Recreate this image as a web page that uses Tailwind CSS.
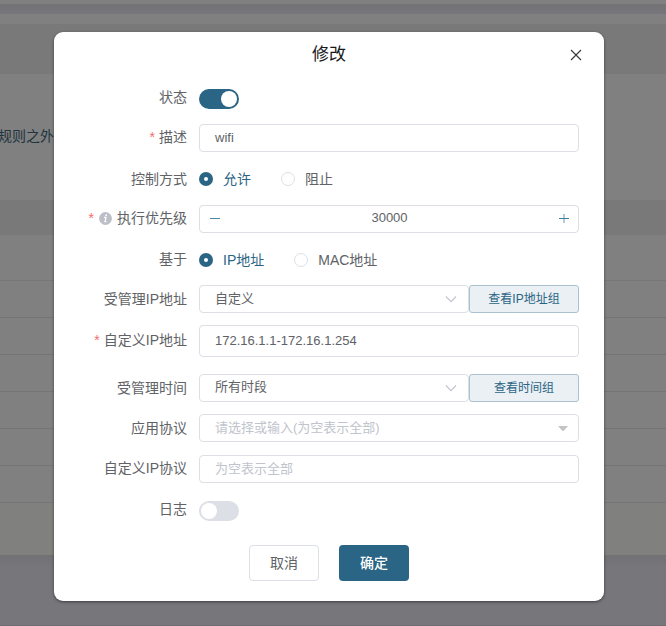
<!DOCTYPE html>
<html lang="zh-CN">
<head>
<meta charset="utf-8">
<title>修改</title>
<script src="https://cdn.jsdelivr.net/npm/@tailwindcss/browser@4"></script>
</head>
<body class="relative h-[626px] w-[666px] overflow-hidden bg-[#76757a] font-['Liberation_Sans','Noto_Sans_CJK_SC',sans-serif] text-sm text-[#606266]">
<!-- dimmed page behind the dialog -->
<div class="flex h-[626px] flex-col">
  <div class="h-1 bg-[#808080]"></div>
  <div class="h-2.5 bg-linear-to-b from-[#737375] to-[#77767c]"></div>
  <div class="h-2.5 bg-[#808080]"></div>
  <div class="h-[50px] bg-[#797979]"></div>
  <div class="h-[126px] bg-[#808080] pt-[52px] leading-5 text-[#20343f]"><span class="-ml-0.5">规则之外</span></div>
  <div class="h-[35px] bg-[#797979]"></div>
  <div class="h-[46px] border-b border-[#76767b] bg-[#808080]"></div>
  <div class="h-[37px] border-b border-[#757577] bg-[#808080]"></div>
  <div class="h-[37px] border-b border-[#757577] bg-[#808080]"></div>
  <div class="h-[37px] border-b border-[#757577] bg-[#808080]"></div>
  <div class="h-[37px] border-b border-[#757577] bg-[#808080]"></div>
  <div class="h-[37px] border-b border-[#757577] bg-[#808080]"></div>
  <div class="h-[37px] border-b border-[#757577] bg-[#808080]"></div>
  <div class="h-[52px] bg-[#80807f]"></div>
  <div class="h-[70px] bg-linear-to-b from-[#727175] to-[#77767b] to-20%"></div>
  <div class="h-px bg-[#6e6b6e]"></div>
</div>

<!-- dialog -->
<div class="absolute left-[54px] top-8 flex h-[569px] w-[550px] flex-col rounded-[9px] bg-white pr-[25px] shadow-[0_1px_3px_rgba(0,0,0,0.5)]">
  <div class="flex h-[52px] items-start">
    <div class="w-[22px]"></div>
    <h1 class="flex-1 pt-[11px] text-center text-[17px] leading-6 text-[#18181b]">修改</h1>
    <svg class="-ml-3 mt-[17px] h-3 w-3" viewBox="0 0 12 12" fill="none" stroke="#35353a" stroke-width="1.1"><path d="M1 1 11 11M11 1 1 11"/></svg>
    <div class="-mr-3 w-[9px]"></div>
  </div>

  <div class="flex h-7 items-center">
    <div class="w-[145px] pr-3 pb-0.5 text-right leading-[25px]">状态</div>
    <div class="mt-0.5 flex h-5 w-10 items-center justify-end rounded-full bg-[#2b6585] p-0.5"><div class="h-4 w-4 rounded-full bg-white"></div></div>
  </div>

  <div class="mt-3 flex h-7 items-center">
    <div class="w-[145px] pr-3 pb-0.5 text-right leading-[25px]"><span class="mr-1 text-[#f56c6c]">*</span>描述</div>
    <div class="flex h-7 flex-1 items-center rounded border border-[#dcdfe6] px-[15px] text-[13px]">wifi</div>
  </div>

  <div class="mt-[13px] flex h-7 items-center">
    <div class="w-[145px] pr-3 text-right leading-7">控制方式</div>
    <div class="flex h-3.5 w-3.5 items-center justify-center rounded-full bg-[#2b6585]"><div class="h-1 w-1 rounded-full bg-white"></div></div>
    <div class="pl-2.5 text-[#2b6585]">允许</div>
    <div class="ml-[30px] h-3.5 w-3.5 rounded-full border border-[#dcdfe6]"></div>
    <div class="pl-2.5">阻止</div>
  </div>

  <div class="mt-3 flex h-7 items-center">
    <div class="flex w-[145px] items-center justify-end pr-3 pb-0.5 leading-[26px]"><span class="mr-[5px] text-[#f56c6c]">*</span>
      <svg class="mr-[5px] h-[13px] w-[13px]" viewBox="0 0 13 13"><circle cx="6.5" cy="6.5" r="6.4" fill="#bcbfc8"/><path d="M5.1 5.4H7L6 9.6h1.3" fill="none" stroke="#fff" stroke-width="1.2"/><circle cx="7.2" cy="3.2" r="0.9" fill="#fff"/></svg>
      <span>执行优先级</span></div>
    <div class="flex h-7 flex-1 items-center justify-between rounded border border-[#dcdfe6] pr-2 pl-[9px] text-[13px]">
      <svg class="h-3 w-3" viewBox="0 0 12 12" stroke="#4a87a6"><path d="M1 5.5H11"/></svg>
      <span class="pb-px">30000</span>
      <svg class="h-3 w-3" viewBox="0 0 12 12" stroke="#3f7f9f"><path d="M1 5.5H11"/><path d="M6 1V10" stroke-opacity="0.8"/></svg>
    </div>
  </div>

  <div class="mt-[13px] flex h-7 items-center">
    <div class="w-[145px] pr-3 pb-0.5 text-right leading-[26px]">基于</div>
    <div class="flex h-3.5 w-3.5 items-center justify-center rounded-full bg-[#2b6585]"><div class="h-1 w-1 rounded-full bg-white"></div></div>
    <div class="pl-2.5 text-[#2b6585]">IP地址</div>
    <div class="ml-[30px] h-3.5 w-3.5 rounded-full border border-[#dcdfe6]"></div>
    <div class="pl-2.5">MAC地址</div>
  </div>

  <div class="mt-[11px] flex h-7 items-center">
    <div class="w-[145px] pr-3 text-right leading-7">受管理IP地址</div>
    <div class="flex h-7 w-[270px] items-center justify-between rounded border border-[#dcdfe6] pr-[11px] pl-[15px] text-[13px]"><span>自定义</span>
      <svg class="h-3 w-3" viewBox="0 0 12 12" fill="none" stroke="#c0c4cc" stroke-width="1.1"><path d="M1 3.5 6 8.7 11 3.5"/></svg></div>
    <div class="flex h-7 flex-1 items-center justify-center rounded-[3px] border border-[#aac1ce] bg-[#eaf0f3] text-xs text-[#2b6585]">查看IP地址组</div>
  </div>

  <div class="mt-3 flex h-8 items-center">
    <div class="w-[145px] pr-3 pb-[3px] text-right leading-7"><span class="mr-1 text-[#f56c6c]">*</span>自定义IP地址</div>
    <div class="flex h-8 flex-1 items-center rounded border border-[#dcdfe6] px-[15px] text-[13px]">172.16.1.1-172.16.1.254</div>
  </div>

  <div class="mt-[17px] flex h-7 items-center">
    <div class="w-[145px] pr-3 text-right leading-7">受管理时间</div>
    <div class="flex h-7 w-[270px] items-center justify-between rounded border border-[#dcdfe6] pr-[11px] pl-[15px] text-[13px]"><span class="pb-px">所有时段</span>
      <svg class="h-3 w-3" viewBox="0 0 12 12" fill="none" stroke="#c0c4cc" stroke-width="1.1"><path d="M1 3.5 6 8.7 11 3.5"/></svg></div>
    <div class="flex h-7 flex-1 items-center justify-center rounded-[3px] border border-[#aac1ce] bg-[#eaf0f3] text-xs text-[#2b6585]">查看时间组</div>
  </div>

  <div class="mt-3 flex h-7 items-center">
    <div class="w-[145px] pr-3 text-right leading-7">应用协议</div>
    <div class="flex h-7 flex-1 items-center justify-between rounded border border-[#dcdfe6] pr-2.5 pl-[15px] text-[13px] text-[#c0c4cc]"><span>请选择或输入(为空表示全部)</span>
      <svg class="h-[5px] w-2.5" viewBox="0 0 10 5" fill="#c4c4c4"><path d="M0 0H10L5.5 5H4.5Z"/></svg></div>
  </div>

  <div class="mt-[13px] flex h-7 items-center">
    <div class="w-[145px] pr-3 pb-0.5 text-right leading-[25px]">自定义IP协议</div>
    <div class="flex h-7 flex-1 items-center rounded border border-[#dcdfe6] px-[15px] text-[13px] text-[#c0c4cc]">为空表示全部</div>
  </div>

  <div class="mt-3.5 flex h-7 items-center">
    <div class="w-[145px] pr-3 pb-[3px] text-right leading-[25px]">日志</div>
    <div class="flex h-5 w-10 items-center rounded-full bg-[#dcdfe6] p-0.5"><div class="h-4 w-4 rounded-full bg-white"></div></div>
  </div>

  <div class="mt-5 flex gap-5 pl-[195px]">
    <button class="h-9 w-[70px] rounded border border-[#dcdfe6]">取消</button>
    <button class="h-9 w-[70px] rounded bg-[#2b6585] font-medium text-white">确定</button>
  </div>
</div>
</body>
</html>
